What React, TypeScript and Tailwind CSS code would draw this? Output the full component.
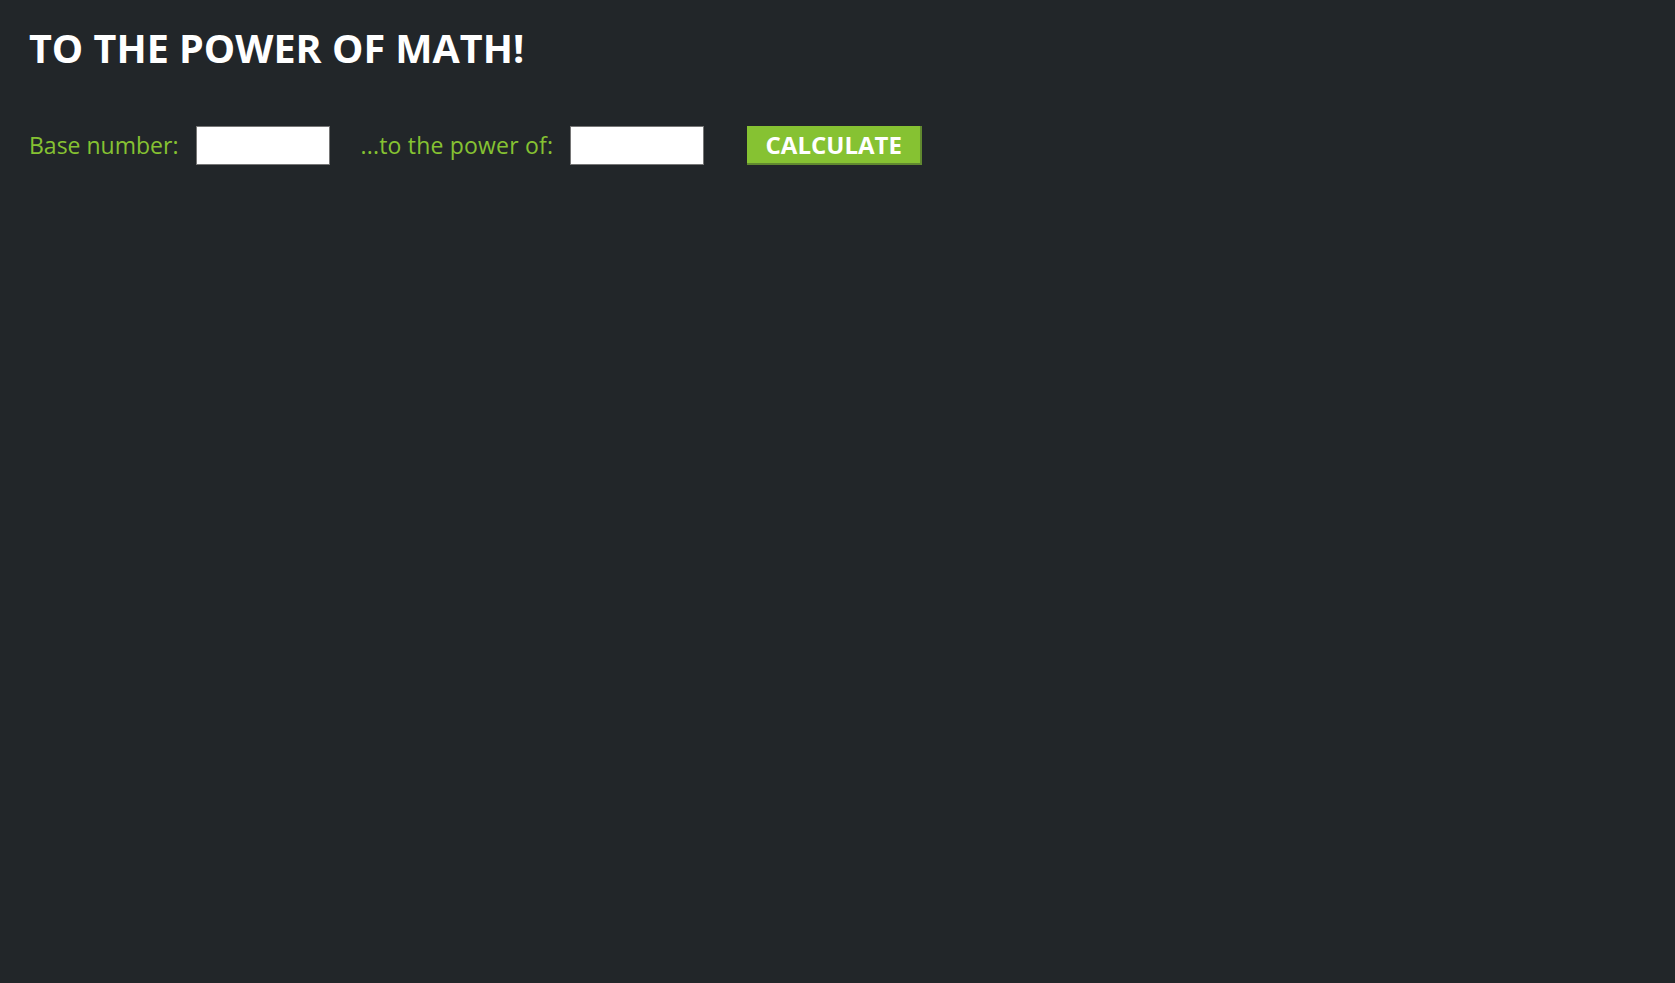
import React, { useState } from "react";

const App = () => {
  const [base, setBase] = useState("");
  const [power, setPower] = useState("");
  const [result, setResult] = useState<number | null>(null);

  const calculate = () => {
    const b = parseFloat(base);
    const p = parseFloat(power);
    if (!isNaN(b) && !isNaN(p)) {
      setResult(Math.pow(b, p));
    }
  };

  return (
    <div
      className="min-h-screen w-full bg-[#222629] px-[29px] pt-[22px]"
      style={{ fontFamily: '"Open Sans", "Noto Sans", sans-serif' }}
    >
      <h1 className="text-[39.5px] font-bold leading-[52px] text-white">
        TO THE POWER OF MATH!
      </h1>
      <div className="mt-[52px] flex items-center">
        <label className="text-[23px] text-[#86c232]">Base number:</label>
        <input
          type="number"
          value={base}
          onChange={(e) => setBase(e.target.value)}
          className="ml-[18px] h-[39px] w-[134px] border border-[#767676] bg-white px-1 text-black outline-none"
        />
        <label className="ml-[30px] text-[23px] tracking-[0.2px] text-[#86c232]">
          ...to the power of:
        </label>
        <input
          type="number"
          value={power}
          onChange={(e) => setPower(e.target.value)}
          className="ml-[17px] h-[39px] w-[134px] border border-[#767676] bg-white px-1 text-black outline-none"
        />
        <button
          onClick={calculate}
          className="ml-[43px] h-[39px] w-[175px] border-r-2 border-b-2 border-[#61892f] bg-[#86c232] text-[24px] font-bold text-white"
        >
          CALCULATE
        </button>
      </div>
      {result !== null && (
        <p className="mt-6 text-[23px] text-white">Result: {result}</p>
      )}
    </div>
  );
};

export default App;
